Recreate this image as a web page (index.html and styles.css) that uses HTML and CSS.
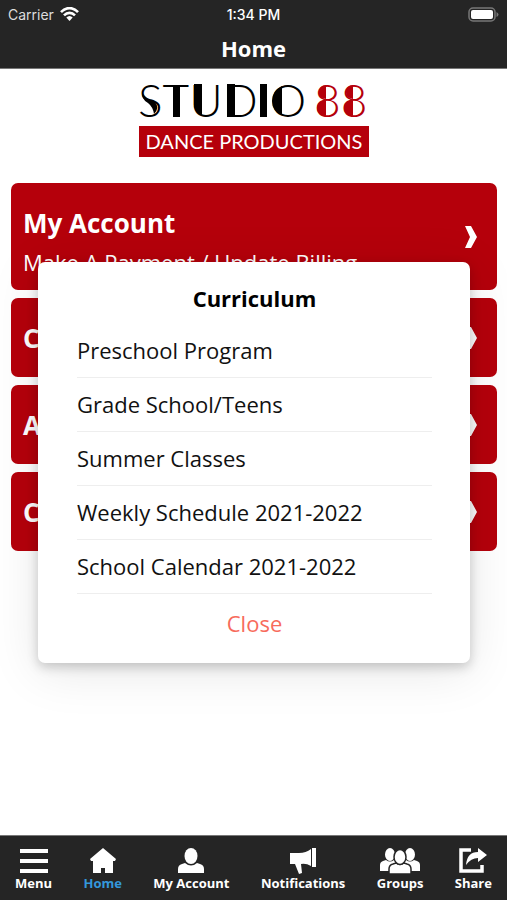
FILE: index.html
```html
<!DOCTYPE html>
<html lang="en">
<head>
<meta charset="utf-8">
<meta name="viewport" content="width=device-width, initial-scale=1">
<title>Home</title>
<link rel="stylesheet" href="styles.css">
</head>
<body>
<header class="top">
  <div class="status">
    <span class="carrier">Carrier
      <svg width="19" height="14" viewBox="0 0 19 14" fill="none" stroke="#fff" stroke-width="2.6" aria-hidden="true"><path d="M1 5.2C6-.3 13-.3 18 5.2M4 8.4c3.3-3.4 7.700-3.400 11 0"/><path d="M6.300 10.600c2-2 4.400-2 6.400 0L9.500 14z" fill="#fff" stroke="none"/></svg>
    </span>
    <span class="time">1:34 PM</span>
    <span class="battery"><svg width="31" height="15" viewBox="0 0 31 15" aria-hidden="true"><rect x="1" y="1" width="26" height="13" rx="4" fill="#252525" stroke="#777" stroke-width="1.500"/><rect x="3" y="3" width="22" height="9" rx="2" fill="#fff"/><path d="M28.500 5v5q2-1 2-2.500T28.500 5z" fill="#777"/></svg></span>
  </div>
  <h1>Home</h1>
</header>
<main>
  <svg class="logo" width="232" height="76" viewBox="0 0 232 76" role="img" aria-label="Studio 88 Dance Productions">
    <text class="name" x="0" y="34">STUDIO</text>
    <text class="number" x="176" y="34">88</text>
    <!-- solid accents on the left side of the letters -->
    <path d="M35 2h7v32h-7zM56 1h8v31q-8-2-8-12zM89 1h8v33h-8zM122 1h7v33h-7zM144 3v29Q134 28 134 18T144 3z"/>
    <path d="M4 9q3 7 13 10 5 6-1 12-1-7-6-11Q3 16 4 9z"/>
    <path d="M188 17v16q-9-1-9-8t9-8zM188 2v14q-7-1-7-7t7-7zM215 17v16q-9-1-9-8t9-8zM215 2v14q-7-1-7-7t7-7z" fill="#b5000b"/>
    <rect x="1" y="43" width="230" height="31" fill="#b5000b"/>
    <text class="tagline" x="116" y="66" text-anchor="middle">DANCE PRODUCTIONS</text>
  </svg>
  <div class="cards">
    <a class="card tall" href="#account"><span><strong>My Account</strong><small>Make A Payment / Update Billing</small></span><svg width="12" height="22" viewBox="0 0 12 22" aria-hidden="true"><path d="M0 0h6l6 11-6 11H0l5-11z" fill="#fff"/></svg></a>
    <a class="card" href="#curriculum"><strong>C</strong><svg width="12" height="22" viewBox="0 0 12 22" aria-hidden="true"><path d="M0 0h6l6 11-6 11H0l5-11z" fill="#fff"/></svg></a>
    <a class="card" href="#about"><strong>A</strong><svg width="12" height="22" viewBox="0 0 12 22" aria-hidden="true"><path d="M0 0h6l6 11-6 11H0l5-11z" fill="#fff"/></svg></a>
    <a class="card" href="#contact"><strong>C</strong><svg width="12" height="22" viewBox="0 0 12 22" aria-hidden="true"><path d="M0 0h6l6 11-6 11H0l5-11z" fill="#fff"/></svg></a>
  </div>
</main>
<section class="dialog" role="dialog" aria-labelledby="dialog-title">
  <h2 id="dialog-title">Curriculum</h2>
  <ul>
    <li><a href="#preschool">Preschool Program</a></li>
    <li><a href="#grade">Grade School/Teens</a></li>
    <li><a href="#summer">Summer Classes</a></li>
    <li><a href="#weekly">Weekly Schedule 2021-2022</a></li>
    <li><a href="#calendar">School Calendar 2021-2022</a></li>
  </ul>
  <button type="button">Close</button>
</section>
<nav>
  <a href="#menu"><svg width="30" height="26" viewBox="0 0 30 26" aria-hidden="true"><path d="M1 1h28v4H1zM1 11h28v4H1zM1 21h28v4H1z"/></svg>Menu</a>
  <a class="active" href="#home"><svg width="26" height="26" viewBox="0 0 26 26" aria-hidden="true"><path d="M13 0L0 11l1 2h2v12h8v-5h4v5h8V13h2l1-2z"/></svg>Home</a>
  <a href="#account"><svg width="26" height="26" viewBox="0 0 26 26" aria-hidden="true"><ellipse cx="13" cy="8" rx="6.500" ry="8"/><path d="M0 25v-4q0-4 4-5l3-1q6 5 12 0l3 1q4 1 4 5v4z"/></svg>My Account</a>
  <a href="#notifications"><svg width="28" height="26" viewBox="0 0 28 26" aria-hidden="true"><path d="M1 5h9q7 0 12-4v17q-5-3-10-2l1 9-3 1-4-10H1zM23 0h4v19h-4z"/></svg>Notifications</a>
  <a href="#groups"><svg width="40" height="26" viewBox="0 0 40 26" aria-hidden="true"><ellipse cx="10" cy="6.500" rx="5" ry="6.500"/><ellipse cx="30" cy="6.500" rx="5" ry="6.500"/><path d="M0 23v-6q0-3 3-4l3-1q4 3 8 0h12q4 3 8 0l3 1q3 1 3 4v6z"/><g stroke="#252525" stroke-width="1.500"><path d="M9 26v-5q0-4 4-5l3-1q4 3 8 0l3 1q4 1 4 5v5z"/><ellipse cx="20" cy="9" rx="6" ry="7.500"/></g></svg>Groups</a>
  <a href="#share"><svg width="30" height="26" viewBox="0 0 30 26" aria-hidden="true"><path d="M13 2H3v21h21v-6" fill="none" stroke="#fff" stroke-width="3.500"/><path d="M8 17Q9 4 20 4V0l9 7-9 7v-4q-7 0-12 7z"/></svg>Share</a>
</nav>
</body>
</html>
```
FILE: styles.css
```css
* { box-sizing: border-box; }
body {
  margin: 0;
  min-height: 100vh;
  display: flex;
  flex-direction: column;
  background: #fff;
  font-family: "Open Sans", sans-serif;
}
a { color: inherit; text-decoration: none; }
.top { background: #252525; color: #fff; border-bottom: 1px solid #777; }
.status {
  display: grid;
  grid-template-columns: 1fr auto 1fr;
  align-items: center;
  height: 28px;
  padding: 0 8px;
  font: 14px Inter, sans-serif;
}
.carrier { display: flex; align-items: center; gap: 6px; color: #ddd; }
.time { font-weight: 500; }
.battery { display: flex; justify-content: flex-end; }
h1 { margin: 0; text-align: center; font-size: 22px; line-height: 40px; }
main { flex: 1; padding: 14px 10px 0 11px; }
.logo { display: block; margin: 0 auto 24px; overflow: visible; }
.logo text { font-family: Lato, sans-serif; }
.name { font-size: 46px; font-weight: 300; fill: #000; }
.number { font-size: 46px; font-weight: 300; fill: #b5000b; }
.logo .tagline { font-size: 20px; fill: #fff; }
.cards { display: grid; gap: 8px; }
.card {
  display: flex;
  align-items: center;
  justify-content: space-between;
  min-height: 79px;
  padding: 0 20px 0 12px;
  border-radius: 7px;
  background: #b5000b;
  color: #fff;
}
.card.tall { min-height: 107px; }
.card.tall span { padding-top: 12px; }
.card strong { display: block; font-size: 26px; line-height: 38px; }
.card small { display: block; font-size: 22px; line-height: 40px; }
.dialog {
  position: absolute;
  top: 262px;
  left: 38px;
  right: 37px;
  padding: 18px 38px 19px 39px;
  border-radius: 7px;
  background: #fff;
  box-shadow: 0 4px 12px rgba(0, 0, 0, .2), 0 8px 50px rgba(0, 0, 0, .1);
  text-align: center;
}
h2 { margin: 0 0 8px; font-size: 22px; line-height: 36px; color: #000; }
ul { margin: 0; padding: 0; list-style: none; text-align: left; }
li { border-bottom: 1px solid #eee; }
li a { display: block; font-size: 22px; line-height: 53px; color: #111; }
.dialog button {
  width: 100%;
  margin-top: 8px;
  padding: 0;
  border: 0;
  background: none;
  font: 22px/42px "Open Sans", sans-serif;
  color: #f76b5c;
}
nav {
  display: flex;
  justify-content: space-between;
  height: 65px;
  padding: 12px 15px 0;
  border-top: 1px solid #777;
  background: #252525;
  color: #fff;
  font-size: 13px;
  line-height: 18px;
  font-weight: 700;
}
nav a { display: flex; flex-direction: column; align-items: center; }
nav svg { fill: #fff; }
.active { color: #3498db; }
```
